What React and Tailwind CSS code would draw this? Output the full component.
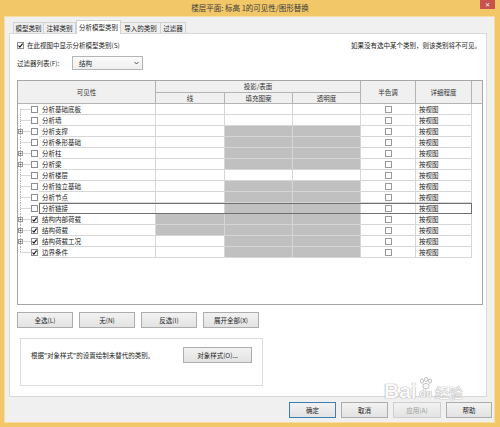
import React from "react";

const rows = [
  { name: "分析基础底板", exp: false, checked: false, line: false, fill: false },
  { name: "分析墙", exp: false, checked: false, line: false, fill: false },
  { name: "分析支撑", exp: true, checked: false, line: false, fill: true },
  { name: "分析条形基础", exp: false, checked: false, line: false, fill: true },
  { name: "分析柱", exp: true, checked: false, line: false, fill: true },
  { name: "分析梁", exp: true, checked: false, line: false, fill: true },
  { name: "分析楼层", exp: false, checked: false, line: false, fill: false },
  { name: "分析独立基础", exp: false, checked: false, line: false, fill: true },
  { name: "分析节点", exp: false, checked: false, line: false, fill: true },
  { name: "分析链接", exp: false, checked: false, line: false, fill: true, sel: true },
  { name: "结构内部荷载", exp: true, checked: true, line: true, fill: true },
  { name: "结构荷载", exp: true, checked: true, line: true, fill: true },
  { name: "结构荷载工况", exp: true, checked: true, line: false, fill: true },
  { name: "边界条件", exp: false, checked: true, line: false, fill: true },
];

function Cb({ checked }) {
  return (
    <span className="w-[7px] h-[7px] border border-[#8e8e8e] bg-white shrink-0 relative flex items-center justify-center">
      {checked && (
        <svg width="7" height="7" viewBox="0 0 7 7" className="absolute left-[-1px] top-[-1px] overflow-visible">
          <path d="M1.5 3.6 L2.9 5 L5.6 1.6" stroke="#1a1a1a" strokeWidth="1.2" fill="none" />
        </svg>
      )}
    </span>
  );
}

function Tree({ exp, first, last }) {
  return (
    <svg width="13" height="11" className="block shrink-0">
      <line x1="2.5" y1={first ? 5.5 : 0} x2="2.5" y2={last ? 5.5 : 11} stroke="#b0b0b0" strokeWidth="1" strokeDasharray="1 1" />
      <line x1="2.5" y1="5.5" x2="13" y2="5.5" stroke="#b0b0b0" strokeWidth="1" strokeDasharray="1 1" />
      {exp && (
        <g>
          <rect x="0.5" y="3.5" width="4" height="4" fill="#ffffff" stroke="#9a9a9a" strokeWidth="1" />
          <line x1="1.5" y1="5.5" x2="3.5" y2="5.5" stroke="#555" strokeWidth="0.8" />
          <line x1="2.5" y1="4.5" x2="2.5" y2="6.5" stroke="#555" strokeWidth="0.8" />
        </g>
      )}
    </svg>
  );
}

function Btn({ children, w = "w-[56px]", extra = "" }) {
  return (
    <div
      className={`${w} h-[16px] border border-[#adadad] bg-gradient-to-b from-[#f2f2f2] to-[#e3e3e3] flex items-center justify-center text-[6.5px] text-[#222] ${extra}`}
    >
      {children}
    </div>
  );
}

export default function App() {
  const hdr = "border-[#b4b4b4] bg-[#f0f0f0] flex items-center justify-center text-[6.5px] text-[#333]";
  const cell = "border-r border-b border-[#d6d6d6] h-[11px]";
  return (
    <div className="w-[500px] h-[427px] bg-[#f1c767] flex flex-col relative overflow-hidden font-['Noto_Sans_CJK_SC','Noto_Sans',sans-serif] leading-none">
      {/* title bar */}
      <div className="h-[16px] shrink-0 relative flex items-center justify-center text-[7.5px] text-[#3a3a3a]">
        楼层平面: 标高 1的可见性/图形替换
        <div className="absolute right-[5px] top-0 w-[15px] h-[9px] bg-[#c9524c] flex items-center justify-center text-white text-[6px]">
          ✕
        </div>
      </div>

      {/* content */}
      <div className="ml-[4px] mr-[5px] mb-[4px] flex-1 bg-[#f0f0f0] border border-[#f7dda0] flex flex-col">
        {/* tabs */}
        <div className="mt-[3px] ml-[8px] h-[13px] flex items-end text-[6.5px] text-[#222]">
          <div className="w-[31px] h-[11px] border border-[#d2d2d2] border-b-0 bg-[#efefef] flex items-center justify-center">模型类别</div>
          <div className="w-[32px] h-[11px] border border-[#d2d2d2] border-l-0 border-b-0 bg-[#efefef] flex items-center justify-center">注释类别</div>
          <div className="w-[45px] h-[14px] border border-[#d2d2d2] border-b-0 bg-white flex items-center justify-center relative z-10 mb-[-1px]">分析模型类别</div>
          <div className="w-[40px] h-[11px] border border-[#d2d2d2] border-l-0 border-b-0 bg-[#efefef] flex items-center justify-center">导入的类别</div>
          <div className="w-[25px] h-[11px] border border-[#d2d2d2] border-l-0 border-b-0 bg-[#efefef] flex items-center justify-center">过滤器</div>
        </div>

        {/* panel */}
        <div className="ml-[4px] mr-[7px] h-[364px] border border-[#d9d9d9] bg-white flex flex-col pl-[7px] pr-[5px] shrink-0">
          <div className="mt-[5px] h-[12px] flex items-center justify-between text-[6.5px] text-[#222]">
            <div className="flex items-center gap-[3px]">
              <Cb checked />
              <span>在此视图中显示分析模型类别(S)</span>
            </div>
            <span>如果没有选中某个类别，则该类别将不可见。</span>
          </div>

          <div className="mt-[5px] h-[14px] flex items-center text-[6.5px] text-[#222]">
            <span className="w-[55px]">过滤器列表(F):</span>
            <div className="w-[71px] h-[14px] border border-[#b5b5b5] bg-gradient-to-b from-[#fbfbfb] to-[#efefef] flex items-center justify-between pl-[6px] pr-[3px]">
              <span>结构</span>
              <svg width="5" height="4" viewBox="0 0 5 4">
                <path d="M0.5 1 L2.5 3 L4.5 1" stroke="#444" strokeWidth="0.9" fill="none" />
              </svg>
            </div>
          </div>

          {/* table */}
          <div className="mt-[10px] w-[466px] h-[225px] border border-[#a6a6a6] bg-white flex flex-col shrink-0">
            <div className="grid grid-cols-[138px_69px_68px_68px_55px_56px_10px] grid-rows-[12px_11px]">
              <div className={`${hdr} row-span-2 border-r border-b`}>可见性</div>
              <div className={`${hdr} col-span-3 border-r border-b`}>投影/表面</div>
              <div className={`${hdr} row-span-2 border-r border-b`}>半色调</div>
              <div className={`${hdr} row-span-2 border-r border-b`}>详细程度</div>
              <div className={`${hdr} row-span-2 border-b`}></div>
              <div className={`${hdr} border-r border-b`}>线</div>
              <div className={`${hdr} border-r border-b`}>填充图案</div>
              <div className={`${hdr} border-r border-b`}>透明度</div>
            </div>
            {rows.map((r, i) => (
              <div key={r.name} className="flex h-[11px]">
                <div className="w-[21px] h-[11px] flex items-center shrink-0">
                  <Tree exp={r.exp} first={i === 0} last={i === rows.length - 1} />
                  <Cb checked={r.checked} />
                </div>
                <div
                  className={`grid grid-cols-[117px_69px_68px_68px_55px_56px] ${
                    r.sel ? "outline outline-1 outline-[#6f6f6f] -outline-offset-1" : ""
                  }`}
                >
                  <div className={`${cell} flex items-center pl-[3px] text-[6.5px] text-[#222]`}>{r.name}</div>
                  <div className={`${cell} ${r.line ? "bg-[#c0c0c0]" : ""}`}></div>
                  <div className={`${cell} ${r.fill ? "bg-[#c0c0c0]" : ""}`}></div>
                  <div className={`${cell} ${r.fill ? "bg-[#c0c0c0]" : ""}`}></div>
                  <div className={`${cell} flex items-center justify-center`}>
                    <span className="w-[7px] h-[7px] border border-[#9a9a9a] bg-white"></span>
                  </div>
                  <div className={`${cell} flex items-center pl-[3px] text-[6.5px] text-[#222]`}>按视图</div>
                </div>
              </div>
            ))}
          </div>

          {/* buttons */}
          <div className="mt-[7px] flex gap-[6px]">
            <Btn>全选(L)</Btn>
            <Btn>无(N)</Btn>
            <Btn>反选(I)</Btn>
            <Btn>展开全部(X)</Btn>
          </div>

          {/* group box */}
          <div className="mt-[10px] ml-[3px] w-[243px] h-[48px] border border-[#dcdcdc] flex items-start justify-between pt-[8px] pl-[10px] pr-[10px]">
            <div className="h-[16px] flex items-center text-[6.5px] text-[#222]">根据"对象样式"的设置绘制未替代的类别。</div>
            <Btn w="w-[69px]">对象样式(O)...</Btn>
          </div>
        </div>

        {/* footer */}
        <div className="mt-[5px] flex justify-end gap-[5px] pr-[2px]">
          <Btn w="w-[47px]" extra="!border-[#3c7fb1]">确定</Btn>
          <Btn w="w-[47px]">取消</Btn>
          <Btn w="w-[48px]" extra="!text-[#9a9a9a] !border-[#cfcfcf]">应用(A)</Btn>
          <Btn w="w-[46px]">帮助</Btn>
        </div>
      </div>

      {/* watermark */}
      <div className="absolute left-[384px] top-[377px] flex items-end text-[#fafafa] [text-shadow:0_0_1px_#9a9a9a,0_0_1px_#9a9a9a] pointer-events-none">
        <span className="text-[21px] font-bold font-['Liberation_Sans',sans-serif]">Bai</span>
        <div className="flex flex-col items-center ml-[1px] mb-[2px]">
          <svg width="16" height="12" viewBox="0 0 16 12">
            <g fill="#fafafa" stroke="#a0a0a0" strokeWidth="0.6">
              <ellipse cx="4" cy="4" rx="1.6" ry="2.2" />
              <ellipse cx="8" cy="2.5" rx="1.6" ry="2.2" />
              <ellipse cx="12" cy="4" rx="1.6" ry="2.2" />
              <ellipse cx="8" cy="9" rx="3.2" ry="2.6" />
            </g>
          </svg>
          <span className="text-[10px] font-bold font-['Liberation_Sans',sans-serif]">du</span>
        </div>
        <span className="text-[14px] ml-[1px] mb-[2px]">经验</span>
      </div>
    </div>
  );
}
